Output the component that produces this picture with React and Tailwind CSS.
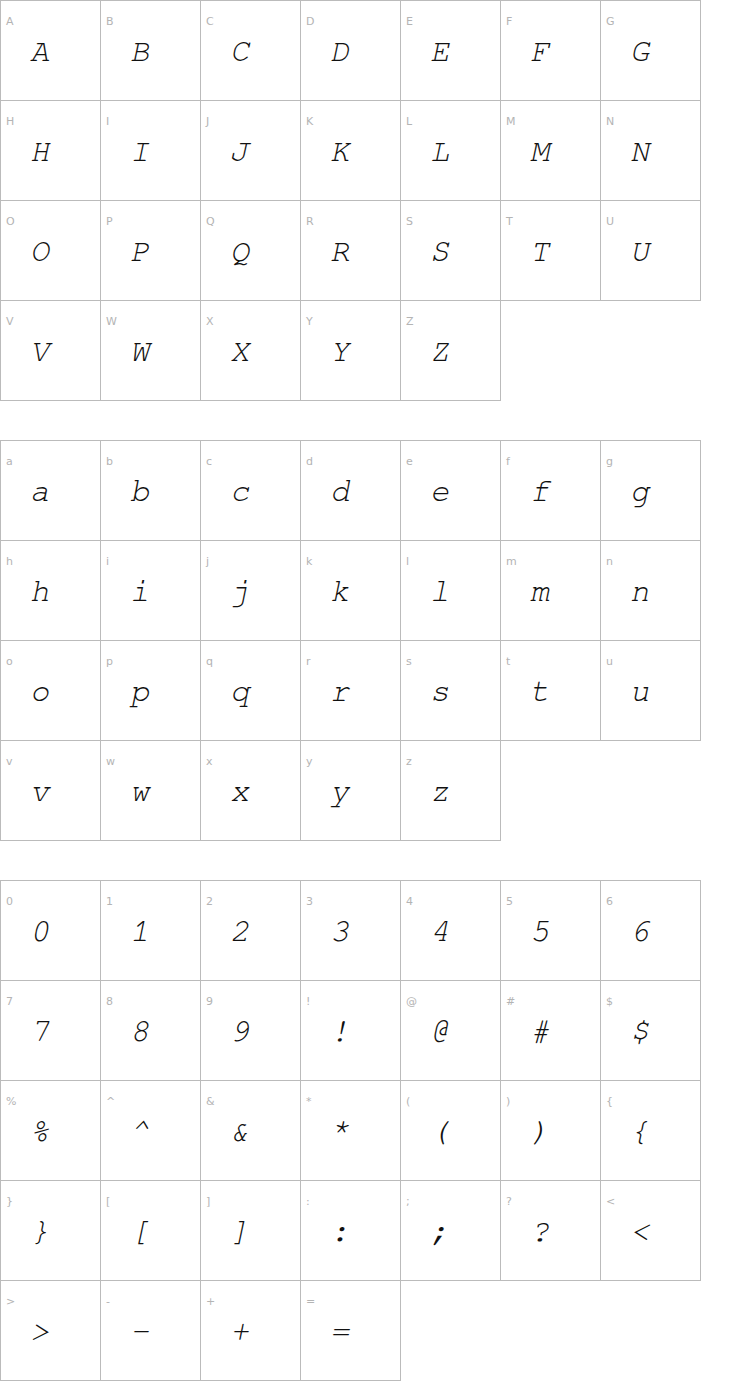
const sections = [
  'ABCDEFGHIJKLMNOPQRSTUVWXYZ'.split(''),
  'abcdefghijklmnopqrstuvwxyz'.split(''),
  ['0','1','2','3','4','5','6','7','8','9','!','@','#','$','%','^','&','*','(',')','{','}','[',']',':',';','?','<','>','-','+','='],
];

function Cell({ ch }) {
  return (
    <div className="h-[100px] w-[100px] border-b border-r border-[#bbbbbb] bg-white">
      <div className="pl-[5px] pt-[14px] font-['DejaVu_Sans',sans-serif] text-[11px] leading-[14px] text-[#b4b4b4]">{ch}</div>
      <div className="pl-[29px] pt-[4px] font-['Nimbus_Mono_PS','FreeMono','Liberation_Mono',monospace] text-[32px] italic leading-[36px] text-[#111]">{ch}</div>
    </div>
  );
}

export default function App() {
  return (
    <div className="min-h-[1400px] bg-white">
      {sections.map((chars, i) => (
        <div key={i} className={`grid w-[701px] grid-cols-7 border-l border-t border-[#bbbbbb] ${i > 0 ? 'mt-[39px]' : ''}`}>
          {chars.map((c) => <Cell key={c} ch={c} />)}
        </div>
      ))}
    </div>
  );
}
